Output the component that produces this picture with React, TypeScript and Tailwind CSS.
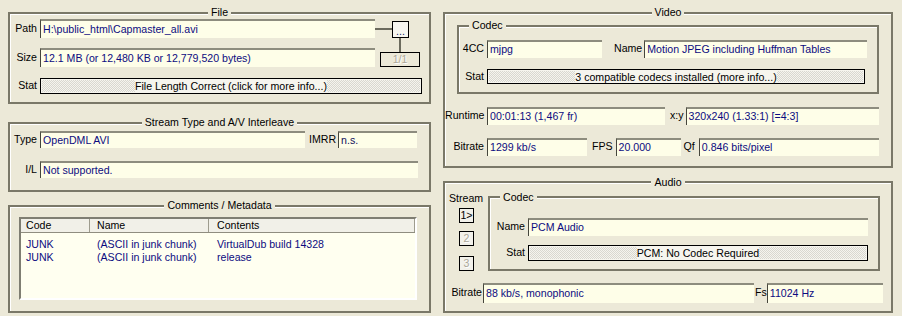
import type { ReactNode } from 'react';

interface GroupProps {
  title: string;
  left?: boolean;
  className?: string;
  children: ReactNode;
}

function Group({ title, left, className, children }: GroupProps) {
  return (
    <fieldset
      className={`border-2 border-[#7a7868] shadow-[inset_1px_1px_0_#ffffff] ${className ?? ''}`}
    >
      <legend
        className={`${left ? 'ml-[10px]' : 'mx-auto'} bg-[#ece9d8] px-[3px] leading-[13px]`}
      >
        {title}
      </legend>
      {children}
    </fieldset>
  );
}

function Label({ w, className, children }: { w: string; className?: string; children: ReactNode }) {
  return (
    <div className={`${w} flex-none whitespace-nowrap text-right ${className ?? 'pr-[3px]'}`}>
      {children}
    </div>
  );
}

function Field({ className, children }: { className: string; children: ReactNode }) {
  return (
    <div
      className={`${className} flex flex-none items-center overflow-hidden whitespace-nowrap border-l border-t-2 border-l-[#45453c] border-t-[#8d8c7e] bg-[#fefee8] pl-[2px] text-[#0c0c80]`}
    >
      {children}
    </div>
  );
}

function StatBar({ className, children }: { className: string; children: ReactNode }) {
  return (
    <div className={`${className} flex-none border border-black bg-[#f6f5ee] p-[1px]`}>
      <div className="flex h-full items-center justify-center bg-[image:repeating-conic-gradient(#d9d8d0_0_25%,#f5f4ee_0_50%)] bg-[length:2px_2px]">
        <span className="bg-[#f6f5ee] leading-[12px]">{children}</span>
      </div>
    </div>
  );
}

function StreamBtn({ disabled, className, children }: { disabled?: boolean; className: string; children: ReactNode }) {
  return (
    <div
      className={`${className} ml-[14px] flex h-[15px] w-[15px] items-center justify-center border border-black bg-[#f2f1ea] leading-[12px] ${
        disabled ? 'text-[#aca899] [text-shadow:1px_1px_0_#ffffff]' : 'text-black'
      }`}
    >
      {children}
    </div>
  );
}

export default function App() {
  return (
    <div className="flex h-[316px] w-[902px] gap-[12px] overflow-hidden bg-[#ece9d8] pl-[8px] pt-[6px] font-['Liberation_Sans',Arial,sans-serif] text-[10.6px] text-black">
      {/* left column */}
      <div className="flex w-[423px] flex-none flex-col">
        <Group title="File" className="pb-[8px]">
          <div className="flex">
            <div className="flex w-[370px] flex-col">
              <div className="flex h-[19px]">
                <Label w="w-[30px] self-center">Path</Label>
                <Field className="h-[19px] w-[335px]">H:\public_html\Capmaster_all.avi</Field>
                <div className="mt-[9px] h-[2px] flex-1 bg-[#6c6b5e]" />
              </div>
              <div className="mt-[10px] flex h-[19px] items-center">
                <Label w="w-[30px]">Size</Label>
                <Field className="h-[19px] w-[335px]">12.1 MB (or 12,480 KB or 12,779,520 bytes)</Field>
              </div>
            </div>
            <div className="flex w-[40px] flex-col">
              <div className="mt-[2px] flex">
                <div className="mt-[7px] h-[2px] w-[12px] bg-[#6c6b5e]" />
                <div className="flex h-[17px] w-[17px] items-end justify-center border border-black bg-[#f7f6f0] pb-[1px] leading-[10px] text-[#222266]">
                  ...
                </div>
              </div>
              <div className="ml-[19px] h-[14px] w-[2px] bg-[#6c6b5e]" />
              <div className="flex h-[15px] w-[40px] items-center justify-center border border-black text-[#aca899] [text-shadow:1px_1px_0_#ffffff]">
                1/1
              </div>
            </div>
          </div>
          <div className="mt-[11px] flex items-center">
            <Label w="w-[30px]">Stat</Label>
            <StatBar className="h-[16px] w-[382px]">File Length Correct (click for more info...)</StatBar>
          </div>
        </Group>

        <Group title="Stream Type and A/V Interleave" className="mt-[12px] pb-[12px]">
          <div className="mt-[2px] flex items-center">
            <Label w="w-[30px]">Type</Label>
            <Field className="h-[17px] w-[265px]">OpenDML AVI</Field>
            <div className="ml-[4px] mr-[2px]">IMRR</div>
            <Field className="h-[17px] w-[79px] text-[#10105a]">n.s.</Field>
          </div>
          <div className="mt-[13px] flex items-center">
            <Label w="w-[30px]">I/L</Label>
            <Field className="h-[17px] w-[378px]">Not supported.</Field>
          </div>
        </Group>

        <Group title="Comments / Metadata" className="mt-[7px] pb-[11px]">
          <div className="ml-[9px] mt-[5px] h-[83px] w-[398px] border-2 border-b-white border-l-[#7f7e72] border-r-white border-t-[#7f7e72] bg-[#fffff0]">
            <div className="flex h-[14px] border-b border-[#8f8d80] bg-[#f1f0e8] leading-[13px]">
              <div className="w-[69px] border-r border-[#9e9c8e] pl-[5px]">Code</div>
              <div className="w-[119px] border-r border-[#9e9c8e] pl-[7px]">Name</div>
              <div className="w-[206px] border-r border-[#9e9c8e] pl-[8px]">Contents</div>
            </div>
            <div className="pt-[5px] leading-[13px] text-[#0c0c80]">
              <div className="flex">
                <div className="w-[69px] pl-[5px]">JUNK</div>
                <div className="w-[119px] pl-[7px]">(ASCII in junk chunk)</div>
                <div className="w-[206px] pl-[8px]">VirtualDub build 14328</div>
              </div>
              <div className="flex">
                <div className="w-[69px] pl-[5px]">JUNK</div>
                <div className="w-[119px] pl-[7px]">(ASCII in junk chunk)</div>
                <div className="w-[206px] pl-[8px]">release</div>
              </div>
            </div>
          </div>
        </Group>
      </div>

      {/* right column */}
      <div className="flex w-[450px] flex-none flex-col">
        <Group title="Video" className="pb-[10px]">
          <Group title="Codec" left className="mx-[12px] pb-[7px]">
            <div className="mt-[8px] flex items-center">
              <Label w="w-[28px]">4CC</Label>
              <Field className="h-[18px] w-[115px]">mjpg</Field>
              <div className="ml-[12px] mr-[2px]">Name</div>
              <Field className="h-[18px] w-[223px]">Motion JPEG including Huffman Tables</Field>
            </div>
            <div className="mt-[11px] flex items-center">
              <Label w="w-[28px]">Stat</Label>
              <StatBar className="h-[15px] w-[378px]">3 compatible codecs installed (more info...)</StatBar>
            </div>
          </Group>
          <div className="mt-[13px] flex items-center">
            <Label w="w-[42px]">Runtime</Label>
            <Field className="h-[18px] w-[178px]">00:01:13 (1,467 fr)</Field>
            <div className="ml-[5px] mr-[2px]">x:y</div>
            <Field className="h-[18px] w-[193px]">320x240 (1.33:1) [=4:3]</Field>
          </div>
          <div className="mt-[13px] flex items-center">
            <Label w="w-[42px]">Bitrate</Label>
            <Field className="h-[18px] w-[100px]">1299 kb/s</Field>
            <div className="ml-[5px] mr-[3px]">FPS</div>
            <Field className="h-[18px] w-[65px]">20.000</Field>
            <div className="ml-[3px] mr-[4px]">Qf</div>
            <Field className="h-[18px] w-[180px]">0.846 bits/pixel</Field>
          </div>
        </Group>

        <Group title="Audio" className="mt-[8px] pb-[8px]">
          <div className="flex">
            <div className="flex w-[43px] flex-none flex-col">
              <div className="mt-[3px] pl-[4px] leading-[13px]">Stream</div>
              <StreamBtn className="mt-[3px]">1&gt;</StreamBtn>
              <StreamBtn disabled className="mt-[8px]">
                2
              </StreamBtn>
              <StreamBtn disabled className="mt-[10px]">
                3
              </StreamBtn>
            </div>
            <Group title="Codec" left className="mt-[2px] w-[392px] pb-[8px]">
              <div className="mt-[14px] flex items-center">
                <Label w="w-[38px]">Name</Label>
                <Field className="h-[18px] w-[340px]">PCM Audio</Field>
              </div>
              <div className="mt-[9px] flex items-center">
                <Label w="w-[38px]">Stat</Label>
                <StatBar className="h-[16px] w-[340px]">PCM: No Codec Required</StatBar>
              </div>
            </Group>
          </div>
          <div className="mt-[12px] flex items-center">
            <Label w="w-[38px]" className="pr-[1px]">
              Bitrate
            </Label>
            <Field className="h-[20px] w-[271px]">88 kb/s, monophonic</Field>
            <div className="ml-[1px]">Fs</div>
            <Field className="h-[20px] w-[116px]">11024 Hz</Field>
          </div>
        </Group>
      </div>
    </div>
  );
}
